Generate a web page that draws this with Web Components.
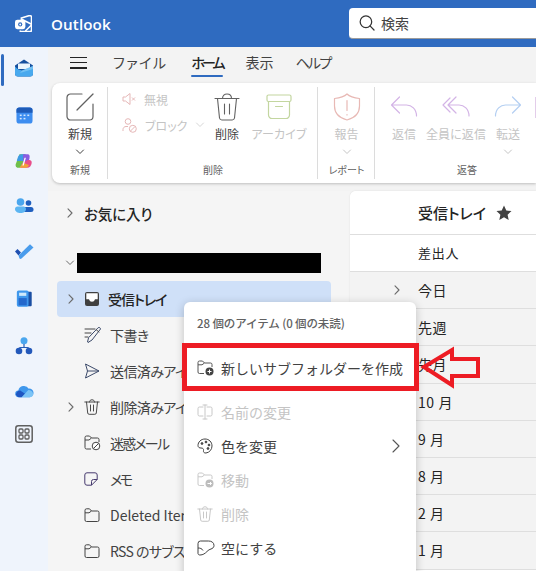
<!DOCTYPE html>
<html lang="ja">
<head>
<meta charset="utf-8">
<title>Outlook</title>
<style>
html,body{margin:0;height:100%;overflow:hidden}
body{font-family:"Noto Sans CJK JP","Noto Sans",sans-serif;color:#242424;font-feature-settings:"palt";background:#f3f3f3}
</style>
</head>
<body>
<ol-app></ol-app>
<script>
const S='fill="none" stroke="currentColor" stroke-linecap="round" stroke-linejoin="round"';
const ICONS={
 logo:`<svg viewBox="3 3 18 18" width="17" height="17" fill="none" stroke="#fff" stroke-width="1.700" stroke-linejoin="round"><path d="M9 6.500 18.500 3.500a2 2 0 0 1 2 1.500V19a1.500 1.500 0 0 1-1.500 1.500H9.500A2 2 0 0 1 8 19.500"/><path d="M9 7 21 13M14 20l7-7"/><rect x="3" y="8" width="11" height="10" rx="2.500" fill="#fff" stroke="none"/><circle cx="8.500" cy="13" r="2.200" fill="#2f6bc0" stroke="none"/><circle cx="8.500" cy="13" r="1" fill="#fff" stroke="none"/></svg>`,
 search:`<svg viewBox="0 0 18 18" width="16" height="16" fill="none" stroke="#333" stroke-width="1.400" stroke-linecap="round"><circle cx="7.800" cy="7.600" r="6.500"/><path d="m12.400 12.300 4.500 4.600"/></svg>`,
 mail:`<svg viewBox="0 0 20 20" width="20" height="20"><path d="M10 1.500 1 7.500v8a3 3 0 0 0 3 3h12a3 3 0 0 0 3-3v-8z" fill="#164f9e"/><path d="M4 5.500h12v5.500H4z" fill="#eaf4fc"/><path d="M1 8.500c2 3 5 3.500 7 4l11-4.500v7.500a3 3 0 0 1-3 3H4a3 3 0 0 1-3-3z" fill="#48a9ee"/><path d="M8 12.500 19 8v3l-13 4z" fill="#8fd0f7" opacity=".6"/></svg>`,
 cal:`<svg viewBox="0 0 18 18" width="17" height="17"><rect x="0.500" y="0.500" width="17" height="17" rx="3" fill="#3d8df0"/><path d="M.5 6V3.500a3 3 0 0 1 3-3h11a3 3 0 0 1 3 3V6z" fill="#1e5bb8"/><g fill="#d7e9fc"><rect x="4" y="8" width="2" height="1.600"/><rect x="8" y="8" width="2" height="1.600"/><rect x="12" y="8" width="2" height="1.600"/><rect x="4" y="11.500" width="2" height="1.600"/><rect x="8" y="11.500" width="2" height="1.600"/></g></svg>`,
 copilot:`<svg viewBox="0 0 20 20" width="18" height="18"><path d="M5 2.500h6l-2 9-3 6H3.500C1 17.500 0 15 1.200 12.500z" fill="#6fbf4a"/><path d="M2 10c1-4 2-7.500 5-7.500h5L9 10z" fill="#3e9be6"/><path d="M9 2.500h5c2.500 0 2.500 2.500 2 5l-2 6-5-2z" fill="#8a5ce0"/><path d="M14 9c3 0 5 .5 4.500 3.500-.5 3-2 5-5 5H6l2-5z" fill="#e84d8a"/><path d="M5 17.500h7c2 0 3-1.500 3.500-3L9 12z" fill="#f2a23a"/><path d="m10.600 6.500-2.400 8.500h1.500l2.400-8.500z" fill="#fff"/></svg>`,
 people:`<svg viewBox="0 0 20 18" width="20" height="18"><circle cx="6.500" cy="4" r="3.800" fill="#4aa6ee"/><circle cx="14.500" cy="5" r="2.800" fill="#1f5fbf"/><rect x="9" y="9" width="10.500" height="5" rx="2.500" fill="#1f5fbf"/><path d="M1 11c0-1.600 1-2.500 2.500-2.500h6c1.500 0 2.500 1 2.500 2.500 0 2.500-2.500 4-5.500 4S1 13.500 1 11z" fill="#5cb5f2"/></svg>`,
 todo:`<svg viewBox="0 0 20 16" width="20" height="16"><path d="M1 8.500 3.500 6l3.500 3.500-2.500 3z" fill="#1f4fb0"/><path d="M4.500 12.500 16 1.200 19.500 4.500 7.500 15.500a1.500 1.500 0 0 1-2 0z" fill="#4a9cec"/></svg>`,
 book:`<svg viewBox="0 0 18 20" width="17" height="18"><rect x="12" y="2" width="5" height="16" rx="1" fill="#1a4ea3"/><rect x="0.500" y="0.500" width="13" height="18" rx="1.800" fill="#3f97ec"/><rect x="3" y="3" width="8" height="3.500" fill="#cfe9fb"/><rect x="2.500" y="9" width="9" height="8" fill="#2468cc"/></svg>`,
 org:`<svg viewBox="0 0 18 18" width="18" height="18"><circle cx="9" cy="3.800" r="3.500" fill="#4aa6ee"/><path d="M9 7v3.500M4 14v-2a1.500 1.500 0 0 1 1.500-1.500h7A1.500 1.500 0 0 1 14 12v2" fill="none" stroke="#245cb8" stroke-width="1.200"/><circle cx="4" cy="14" r="3.300" fill="#2358ba"/><circle cx="14" cy="14" r="3.300" fill="#2358ba"/></svg>`,
 cloud:`<svg viewBox="0 0 20 13" width="19" height="13"><path d="M4 12.500a3.500 3.500 0 0 1-.500-7A6 6 0 0 1 14.500 3.500a4.500 4.500 0 0 1 1 9z" fill="#3f97ec"/><path d="M1 9.500C1.500 7 3 5.500 5.500 5.500L11 9 7 12.500H4c-1.500 0-2.500-1.500-3-3z" fill="#1f56c2"/><path d="M7 12.500 14 5c2 0 5 1 5 4.500 0 2-1.500 3-3.500 3z" fill="#7cc4f6"/></svg>`,
 apps:`<svg viewBox="0 0 18 18" width="18" height="18" ${S} stroke="#5f5f5f" stroke-width="1.300" style="color:#5f5f5f"><rect x=".8" y=".8" width="16.400" height="16.400" rx="2.500" stroke-width="1.500"/><rect x="4" y="4" width="4" height="4" rx="1"/><rect x="10" y="4" width="4" height="4" rx="1"/><rect x="4" y="10" width="4" height="4" rx="1"/><rect x="10" y="10" width="4" height="4" rx="1"/></svg>`,
 compose:`<svg viewBox="0 0 28 28" width="28" height="28" fill="none" stroke="#616161" stroke-width="1.200" stroke-linecap="round"><path d="M16 1H4.500A3.500 3.500 0 0 0 1 4.500v19A3.500 3.500 0 0 0 4.500 27h19a3.500 3.500 0 0 0 3.500-3.500V11"/><path d="M11 17 27 1"/></svg>`,
 mute:`<svg viewBox="0 0 14 14" width="14" height="14" fill="none" stroke="#e5b7b7" stroke-width="1"><path d="M1 5v4h2.500L8 12.500v-11L3.500 5zM10 5.500l3 3M13 5.500l-3 3"/></svg>`,
 block:`<svg viewBox="0 0 15 15" width="15" height="15" fill="none" stroke="#e5b7b7" stroke-width="1"><circle cx="6" cy="3.500" r="2.800"/><path d="M1 13v-1.500C1 9.800 2.300 8.500 4 8.500h2"/><circle cx="10.800" cy="10.800" r="3.500"/><path d="m8.500 13 4.500-4.500"/></svg>`,
 trashBig:`<svg viewBox="0 0 26 28" width="26" height="28" fill="none" stroke="#616161" stroke-width="1.100" stroke-linecap="round"><path d="M1 5.500h24M8.500 5.500C8.500 2.500 10.500 1 13 1s4.500 1.500 4.500 4.500M3.500 5.500 5.500 25a2.500 2.500 0 0 0 2.500 2h10a2.500 2.500 0 0 0 2.500-2l2-19.500M10.500 11v10M15.500 11v10"/></svg>`,
 archive:`<svg viewBox="0 0 26 28" width="26" height="28" fill="none" stroke="#c3d6a0" stroke-width="1.200" stroke-linecap="round"><rect x="1" y="2" width="24" height="6.500" rx="1.500"/><path d="M2.500 8.500V22a3.500 3.500 0 0 0 3.500 3.500h14a3.500 3.500 0 0 0 3.500-3.500V8.500M9.500 13.500h7"/></svg>`,
 shield:`<svg viewBox="0 0 28 28" width="28" height="28" fill="none" stroke="#e8b9b5" stroke-width="1.200" stroke-linecap="round" stroke-linejoin="round"><path d="M14 1c3 3 7 4 12.500 4.500V13c0 7-5 12-12.500 14C6.500 25 1.500 20 1.500 13V5.500C7 5 11 4 14 1z"/><path d="M14 7.500v10M14 21.500v.5"/></svg>`,
 reply:`<svg viewBox="0 0 28 24" width="28" height="24" fill="none" stroke="#d3b4e6" stroke-width="1.200" stroke-linecap="round" stroke-linejoin="round"><path d="M9.500 2 1.500 10l8 8M1.500 10h15c5 0 10 4 10 11"/></svg>`,
 replyAll:`<svg viewBox="0 0 28 24" width="28" height="24" fill="none" stroke="#d3b4e6" stroke-width="1.200" stroke-linecap="round" stroke-linejoin="round"><path d="M8 3 1 10l7 7M14 2l-8 8 8 8M6 10h11c5 0 10 4 10 11"/></svg>`,
 forward:`<svg viewBox="0 0 28 24" width="28" height="24" fill="none" stroke="#b4cff2" stroke-width="1.200" stroke-linecap="round" stroke-linejoin="round"><path d="m18.500 2 8 8-8 8M26.500 10h-15c-5 0-10 4-10 11"/></svg>`,
 chev:`<svg viewBox="0 0 10 6" width="10" height="6" ${S} stroke-width="1"><path d="M1.500 1 5 4.500 8.500 1"/></svg>`,
 right:`<svg viewBox="0 0 6 10" width="6" height="10" fill="none" stroke="#6b6b6b" stroke-width="1.100" stroke-linecap="round" stroke-linejoin="round"><path d="m1 .8 4 4.200-4 4.200"/></svg>`,
 rightBig:`<svg viewBox="0 0 8 14" width="8" height="14" fill="none" stroke="#555" stroke-width="1.100" stroke-linecap="round" stroke-linejoin="round"><path d="m1 1 6 6-6 6"/></svg>`,
 inbox:`<svg viewBox="0 0 16 16" width="16" height="16"><path d="M3 1h10a2 2 0 0 1 2 2v10a2 2 0 0 1-2 2H3a2 2 0 0 1-2-2V3a2 2 0 0 1 2-2z" fill="#404040"/><path d="M2.300 2.300h11.400v6H11c-.5 1.700-1.600 2.500-3 2.500S5.500 10 5 8.300H2.300z" fill="#fff"/></svg>`,
 draft:`<svg viewBox="0 0 18 18" width="18" height="18" fill="none" stroke="#444" stroke-width="1" stroke-linecap="round" stroke-linejoin="round"><path d="M1 3h10M1 7h6M1 11h3"/><path d="M14.500 1.500c1-.5 2 .5 2 1.500L8 14l-4 2.500-.5-.5 1-4z" stroke="#3c4a6a"/><path d="m12.500 4 2.500 2"/></svg>`,
 send:`<svg viewBox="0 0 16 16" width="16" height="16" fill="none" stroke="#444" stroke-width="1" stroke-linejoin="round"><path d="M1.500 1 15 8 1.500 15l2-7zM3.500 8H15" stroke="#3c4a6a"/></svg>`,
 trash:`<svg viewBox="0 0 16 16" width="16" height="16" fill="none" stroke="#4a4a4a" stroke-width="1" stroke-linecap="round"><path d="M.8 3h14.400M5.500 3C5.500 1.500 6.500.8 8 .8s2.500.7 2.500 2.200M2.500 3 3.700 14a1.500 1.500 0 0 0 1.500 1.300h5.600a1.500 1.500 0 0 0 1.500-1.300L13.500 3M6.500 6v6M9.500 6v6"/></svg>`,
 junk:`<svg viewBox="0 0 17 16" width="17" height="16" fill="none" stroke="#444" stroke-width="1" stroke-linejoin="round"><path d="M7 14H2.500A1.500 1.500 0 0 1 1 12.500v-10A1.500 1.500 0 0 1 2.500 1h3L7.500 3h6A1.500 1.500 0 0 1 15 4.500V7M1 5h4l2.500-2"/><circle cx="12" cy="11" r="3.800" fill="#fff"/><path d="m9.500 13.500 5-5"/></svg>`,
 note:`<svg viewBox="0 0 14 14" width="14" height="14" fill="none" stroke="#463a6e" stroke-width="1" stroke-linejoin="round"><path d="M3 .8h8A2.200 2.200 0 0 1 13.200 3v4.500L7.500 13.200H3A2.200 2.200 0 0 1 .8 11V3A2.200 2.200 0 0 1 3 .8zM13.200 7.500H9.500a2 2 0 0 0-2 2v3.700"/></svg>`,
 folder:`<svg viewBox="0 0 16 14" width="16" height="14" fill="none" stroke="#444" stroke-width="1" stroke-linejoin="round"><path d="M1 3v9a1.500 1.500 0 0 0 1.500 1.500h11A1.500 1.500 0 0 0 15 12V4.500A1.500 1.500 0 0 0 13.500 3H7.500L5.500.8h-3A1.500 1.500 0 0 0 1 2.300zM1 4.800h4L7.500 3"/></svg>`,
 subfolder:`<svg viewBox="0 0 18 16" width="18" height="16" fill="none" stroke="#555" stroke-width="1" stroke-linejoin="round"><path d="M7 13.500H2.500A1.500 1.500 0 0 1 1 12V2.500A1.500 1.500 0 0 1 2.500 1h3L7.500 3h6A1.500 1.500 0 0 1 15 4.500V7M1 4.800h4L7.500 3"/><circle cx="12.500" cy="11.500" r="4" fill="#444" stroke="none"/><path d="M12.500 9.500v4M10.500 11.500h4" stroke="#fff"/></svg>`,
 rename:`<svg viewBox="0 0 16 16" width="16" height="16" fill="none" stroke="#c8c8c8" stroke-width="1" stroke-linecap="round"><path d="M6 3H2.500A1.500 1.500 0 0 0 1 4.500v6A1.500 1.500 0 0 0 2.500 12H6M10 3h3.500A1.500 1.500 0 0 1 15 4.500v6a1.500 1.500 0 0 1-1.500 1.500H10M8 1v14M6 1h4M6 15h4"/></svg>`,
 palette:`<svg viewBox="0 0 16 16" width="16" height="16" fill="none" stroke="#424242" stroke-width="1"><path d="M8 1C4 1 1 4 1 7.500c0 2 1.500 2.500 3 2.500 2 0 2.800 1 2.500 2.500-.3 1.500.5 2.700 2.500 2.500 3.500-.5 6-3.500 6-7C15 4 12 1 8 1z"/><circle cx="5" cy="5.500" r=".9" fill="#424242"/><circle cx="9" cy="4" r=".9" fill="#424242"/><circle cx="12" cy="7" r=".9" fill="#424242"/><circle cx="11" cy="10.500" r=".9" fill="#424242"/></svg>`,
 move:`<svg viewBox="0 0 18 16" width="18" height="16" fill="none" stroke="#c8c8c8" stroke-width="1" stroke-linejoin="round"><path d="M7 13.500H2.500A1.500 1.500 0 0 1 1 12V2.500A1.500 1.500 0 0 1 2.500 1h3L7.500 3h6A1.500 1.500 0 0 1 15 4.500V7M1 4.800h4L7.500 3"/><circle cx="12.500" cy="11.500" r="4" fill="#bdbdbd" stroke="none"/><path d="M10.500 11.500h4M13 10l1.500 1.500L13 13" stroke="#fff"/></svg>`,
 trashOff:`<svg viewBox="0 0 16 16" width="16" height="16" fill="none" stroke="#c8c8c8" stroke-width="1" stroke-linecap="round"><path d="M.8 3h14.400M5.500 3C5.500 1.500 6.500.8 8 .8s2.500.7 2.500 2.200M2.500 3 3.700 14a1.500 1.500 0 0 0 1.500 1.300h5.600a1.500 1.500 0 0 0 1.500-1.300L13.500 3M6.500 6v6M9.500 6v6"/></svg>`,
 empty:`<svg viewBox="0 0 18 16" width="18" height="16" fill="none" stroke="#424242" stroke-width="1" stroke-linejoin="round"><path d="M1 3.500A2.500 2.500 0 0 1 3.500 1h8C14.500 1 17 2.500 17 5.500c0 2-1.500 3-3 3.500-1.500.5-2.500 1-4 2.500-2 2-4 3.500-7 3.500-1 0-2-.5-2-1.500z"/><path d="M1 8c2 0 4 .5 5 2.500"/></svg>`,
 star:`<svg viewBox="0 0 16 16" width="16" height="16"><path d="m8 .5 2.300 5 5.200.6-3.900 3.600 1.100 5.300L8 12.300l-4.700 2.700 1.100-5.300L.5 6.100l5.200-.6z" fill="#424242"/></svg>`
};
function comp(name,html){
 customElements.define(name,class extends HTMLElement{
  connectedCallback(){
   if(this.shadowRoot)return;
   const r=this.attachShadow({mode:'open'});
   r.innerHTML=typeof html==='function'?html(this):html;
  }
 });
}
comp('ol-app',`<style>
:host{display:grid;grid-template-columns:48px 1fr;grid-template-rows:47px 1fr;width:536px;height:571px;overflow:hidden;position:relative}
ol-header{grid-column:1/3}
main{min-width:0;display:flex;flex-direction:column;overflow:hidden;background:#f3f3f3}
.lower{display:flex;flex:1;min-height:0;padding-top:8px}
</style>
<ol-header></ol-header><ol-rail></ol-rail>
<main><ol-tabs></ol-tabs><ol-ribbon></ol-ribbon>
<div class="lower"><ol-folders></ol-folders><ol-list></ol-list></div></main>
<ol-menu></ol-menu><ol-callout></ol-callout>`);
comp('ol-header',()=>`<style>
:host{display:flex;align-items:center;background:#2f6bc0;height:47px;color:#fff}
.logo{display:flex;margin-left:15px;width:17px}
b{font:600 15.200px "Open Sans","Noto Sans",sans-serif;margin-left:19px;letter-spacing:.1px;flex:1}
.s{width:187px;height:31px;box-sizing:border-box;background:#fff;border-radius:4px 0 0 4px;border-bottom:1px solid #9b9b9b;display:flex;align-items:center;gap:6px;padding:0 0 0 10px;color:#424242;font-size:14px;margin-top:-1px}
.s svg{flex:none}
</style><span class="logo">${ICONS.logo}</span><b>Outlook</b><div class="s">${ICONS.search}<span>検索</span></div>`);
comp('ol-rail',()=>{
 const list=[['mail',42],['cal',52],['copilot',40],['people',52],['todo',36],['book',60],['org',34],['cloud',56],['apps',30]];
 return `<style>
 :host{display:flex;flex-direction:column;align-items:center;background:#eff4fc;position:relative}
 i{display:flex;align-items:center;justify-content:center;width:48px;flex:none}
 .sel{position:absolute;left:1px;top:7px;width:3px;height:32px;background:#2f6bc0;border-radius:2px}
 </style><span class="sel"></span>`+list.map(([n,h])=>`<i style="height:${h}px">${ICONS[n]}</i>`).join('');
});
comp('ol-tabs',`<style>
:host{display:flex;align-items:flex-start;height:36px;flex:none;padding-left:22px;font-size:14px;color:#424242;box-sizing:border-box}
.b{display:flex;flex-direction:column;gap:4px;width:17px;padding-top:10px;margin-right:26px}
.b i{height:1.200px;background:#242424;display:block}
span{line-height:20px;padding-top:5px;height:29px;box-sizing:border-box;position:relative;white-space:nowrap}
.f{letter-spacing:1.500px;margin-right:24px}
.on{font-weight:500;color:#242424;letter-spacing:-3px;margin-right:23px}
.v{margin-right:22px}
.h{letter-spacing:-1.700px}
.on::after{content:"";position:absolute;left:0;right:0;bottom:-1px;height:2px;background:#2f6bc0;border-radius:1px}
</style><div class="b"><i></i><i></i><i></i></div><span class="f">ファイル</span><span class="on">ホーム</span><span class="v">表示</span><span class="h">ヘルプ</span>`);
comp('ol-big',(h)=>`<style>
:host{display:flex;flex-direction:column;align-items:center;width:${h.getAttribute('w')||50}px;flex:none;font-size:12px;color:${h.hasAttribute('off')?'#c4c4c4':'#424242'}}
.ic{height:28px;display:flex;align-items:center;justify-content:center}
.l{line-height:18px;margin-top:4px;white-space:nowrap;letter-spacing:.1px}
.c{height:10px;display:flex;align-items:center;margin-top:4px}
</style><div class="ic">${ICONS[h.getAttribute('icon')]}</div><div class="l">${h.getAttribute('label')}</div>${h.hasAttribute('chev')?`<div class="c">${ICONS.chev}</div>`:''}`);
comp('ol-group',(h)=>`<style>
:host{display:flex;flex-direction:column;width:${h.getAttribute('w')}px;flex:none;box-sizing:border-box;height:92px;position:relative}
:host([line])::after{content:"";position:absolute;right:0;top:0;bottom:0;width:1px;background:#dcdcdc}
.body{flex:1;display:flex;padding-top:6px;min-height:0}
.g{text-align:center;font-size:10px;line-height:16px;color:#616161;margin-bottom:1px}
</style><div class="body"><slot></slot></div><div class="g">${h.getAttribute('label')}</div>`);
comp('ol-ribbon',`<style>
:host{display:flex;height:100px;flex:none;margin-left:4px;background:#fff;border-radius:8px 0 0 8px;box-shadow:0 1px 3px rgba(0,0,0,.22);padding-top:4px;box-sizing:border-box;overflow:hidden}
.stack{display:flex;flex-direction:column;font-size:12px;color:#c4c4c4;width:96px;flex:none;padding-left:14px;box-sizing:border-box}
.stack div{display:flex;align-items:center;height:26px;gap:8px;white-space:nowrap;flex:none}
.stack div:first-child{margin-top:-7px}
.stack svg{flex:none}
.stack .x{color:#d6d6d6;display:flex}
.sliver{display:block;width:2px;height:21px;margin:4px 0 0 -2px;border-left:1px solid #e3cdea;flex:none}
</style>
<ol-group w="56" line label="新規"><ol-big w="56" icon="compose" label="新規" chev></ol-big></ol-group>
<ol-group w="210" line label="削除">
 <div class="stack"><div>${ICONS.mute}<span>無視</span></div><div>${ICONS.block}<span>ブロック</span><span class="x">${ICONS.chev}</span></div></div>
 <ol-big w="46" icon="trashBig" label="削除"></ol-big>
 <ol-big w="58" off icon="archive" label="アーカイブ"></ol-big>
</ol-group>
<ol-group w="57" line label="レポート"><ol-big w="57" off icon="shield" label="報告" chev></ol-big></ol-group>
<ol-group w="184" label="返答">
 <ol-big w="58" off icon="reply" label="返信"></ol-big>
 <ol-big w="46" off icon="replyAll" label="全員に返信"></ol-big>
 <ol-big w="58" off icon="forward" label="転送" chev></ol-big>
 <i class="sliver"></i>
</ol-group>`);
comp('ol-folder',(h)=>`<style>
:host{display:flex;align-items:center;height:36px;box-sizing:border-box;font-size:14px;color:#424242;white-space:nowrap;position:relative;border-radius:4px;flex:none}
:host([sel]){background:#cfe0f8;color:#242424;font-weight:500}
.a{width:27px;flex:none;display:flex;justify-content:center}
.ic{width:${h.hasAttribute('sel')?24:26}px;flex:none;display:flex;justify-content:flex-start}
span{letter-spacing:${h.getAttribute('ls')||0}px;display:block}
</style><div class="a">${h.hasAttribute('arrow')?ICONS.right:''}</div><div class="ic">${ICONS[h.getAttribute('icon')]}</div><span>${h.getAttribute('label')}</span>`);
comp('ol-folders',`<style>
:host{display:flex;flex-direction:column;width:302px;flex:none;box-sizing:border-box;padding:0 0 0 9px;background:#f5f5f5;min-height:0;overflow:hidden}
.fav{display:flex;align-items:center;height:30px;margin-top:7px;padding-left:10px;gap:11px;font-size:14.500px;font-weight:500;color:#242424;letter-spacing:-.1px}
.acc{display:flex;align-items:center;height:20px;margin-top:25px;margin-bottom:8px;padding-left:8px;gap:2px;color:#6b6b6b}
.acc b{display:block;width:244px;height:20px;background:#000}
ol-folder{width:274px}
</style>
<div class="fav">${ICONS.right}<span>お気に入り</span></div>
<div class="acc">${ICONS.chev}<b></b></div>
<ol-folder sel arrow icon="inbox" label="受信トレイ" ls="-1"></ol-folder>
<ol-folder icon="draft" label="下書き" ls="-.6"></ol-folder>
<ol-folder icon="send" label="送信済みアイテム" ls="-.6"></ol-folder>
<ol-folder arrow icon="trash" label="削除済みアイテム" ls="-.6"></ol-folder>
<ol-folder icon="junk" label="迷惑メール" ls="-1.800"></ol-folder>
<ol-folder icon="note" label="メモ" ls="-2.500"></ol-folder>
<ol-folder icon="folder" label="Deleted Items"></ol-folder>
<ol-folder icon="folder" label="RSS のサブスクリプション" ls="-.6"></ol-folder>`);
comp('ol-row',(h)=>`<style>
:host{display:flex;align-items:center;height:37.200px;box-sizing:border-box;border-bottom:1px solid #dedede;font-size:14px;color:#242424;flex:none;background:#f3f3f3;letter-spacing:.6px}
.a{width:68px;flex:none;display:flex;justify-content:flex-end;padding-right:18px;box-sizing:border-box}
</style><div class="a">${h.hasAttribute('arrow')?ICONS.right:''}</div><span>${h.getAttribute('label')}</span>`);
comp('ol-list',()=>`<style>
:host{display:flex;flex-direction:column;flex:1;min-width:0;background:#fff;border-radius:6px 0 0 0;overflow:hidden;box-shadow:0 0 2px rgba(0,0,0,.1)}
.t{display:flex;align-items:center;height:44px;box-sizing:border-box;border-bottom:1px solid #dedede;padding-left:68px;font-size:15px;font-weight:500;gap:10px;flex:none;background:#fff}
.h{display:flex;align-items:center;height:37px;box-sizing:border-box;border-bottom:1px solid #dedede;padding:0 0 2px 68px;font-size:13px;letter-spacing:.8px;flex:none;background:#fff}
</style><div class="t"><span>受信トレイ</span>${ICONS.star}</div><div class="h">差出人</div>
<ol-row arrow label="今日"></ol-row><ol-row label="先週"></ol-row><ol-row label="先月"></ol-row><ol-row label="10 月"></ol-row><ol-row label="9 月"></ol-row><ol-row label="8 月"></ol-row><ol-row label="2 月"></ol-row><ol-row label="1 月"></ol-row>`);
comp('ol-mi',(h)=>`<style>
:host{display:flex;align-items:center;height:34px;box-sizing:border-box;padding:0 16px 0 13px;font-size:14px;font-feature-settings:normal;color:${h.hasAttribute('off')?'#c4c4c4':'#424242'};white-space:nowrap;flex:none}
.ic{width:24px;flex:none;display:flex}
span{flex:1}
</style><div class="ic">${ICONS[h.getAttribute('icon')]}</div><span>${h.getAttribute('label')}</span>${h.hasAttribute('sub')?ICONS.rightBig:''}`);
comp('ol-menu',`<style>
:host{position:absolute;left:184px;top:302px;width:232px;height:280px;background:#fff;border-radius:6px;box-shadow:0 2px 10px rgba(0,0,0,.22);display:flex;flex-direction:column;box-sizing:border-box}
.h{height:42px;font-size:11.500px;font-weight:500;color:#616161;display:flex;align-items:center;padding-left:13px;flex:none;box-sizing:border-box;font-feature-settings:normal;white-space:nowrap;letter-spacing:-.1px}
.hi{height:47px;display:flex;flex-direction:column;justify-content:center;flex:none;margin-bottom:4px}
</style>
<div class="h">28 個のアイテム (0 個の未読)</div>
<div class="hi"><ol-mi icon="subfolder" label="新しいサブフォルダーを作成"></ol-mi></div>
<ol-mi off icon="rename" label="名前の変更"></ol-mi>
<ol-mi icon="palette" label="色を変更" sub></ol-mi>
<ol-mi off icon="move" label="移動"></ol-mi>
<ol-mi off icon="trashOff" label="削除"></ol-mi>
<ol-mi icon="empty" label="空にする"></ol-mi>`);
comp('ol-callout',`<style>
:host{position:absolute;left:0;top:0;width:536px;height:571px;pointer-events:none;display:block}
.box{position:absolute;left:182px;top:343px;width:237px;height:48px;box-sizing:border-box;border:5px solid #ed1c24}
svg{position:absolute;left:420px;top:345px}
</style><div class="box"></div>
<svg width="62" height="44" viewBox="0 0 62 44" fill="none" stroke="#ed1c24" stroke-width="4" stroke-linejoin="miter"><path d="M4 22 32 5v9h26v17H32v9z"/></svg>`);
</script>
</body>
</html>
